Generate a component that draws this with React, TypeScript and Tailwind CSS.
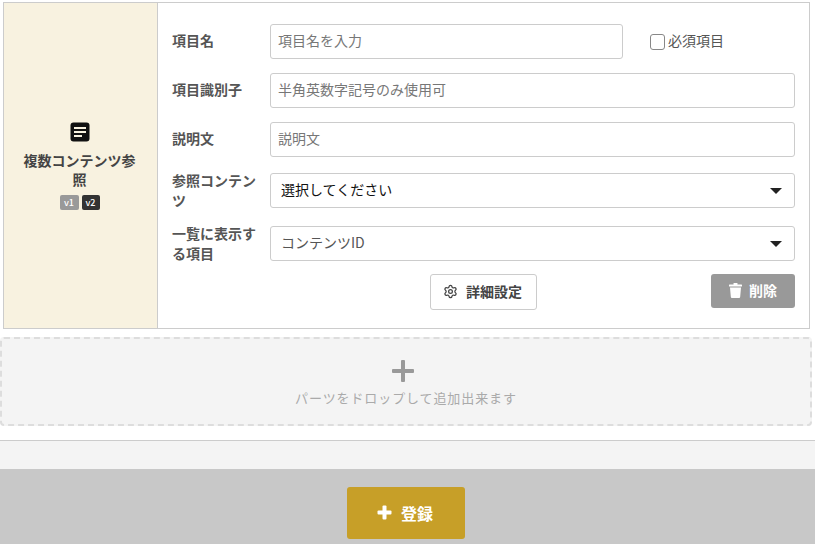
import React from 'react';
import { Settings } from 'lucide-react';

const font = "font-['Noto_Sans_CJK_JP','Noto_Sans',sans-serif]";

function Label({ children, single }: { children: React.ReactNode; single?: boolean }) {
  return (
    <div className={`w-[98px] shrink-0 pr-2 text-[14px] leading-[20px] font-bold text-[#555] ${single ? 'pb-[4px]' : 'pb-[1px]'}`}>
      {children}
    </div>
  );
}

function TextInput({ placeholder, className = '' }: { placeholder: string; className?: string }) {
  return (
    <input
      type="text"
      placeholder={placeholder}
      className={`h-[35px] rounded-[3px] border border-[#ccc] bg-white px-[7px] pb-[4px] text-[14px] outline-none placeholder:text-[#777] ${className}`}
    />
  );
}

function Select({ value, color }: { value: string; color: string }) {
  return (
    <div className={`flex h-[35px] flex-1 items-center justify-between rounded-[3px] border border-[#ccc] bg-white pl-[10px] pr-[12px] text-[14px] ${color}`}>
      <span className="pb-[2px]">{value}</span>
      <span className="h-0 w-0 border-x-[6px] border-t-[6px] border-x-transparent border-t-[#222]" />
    </div>
  );
}

export default function App() {
  return (
    <div className={`flex h-[544px] w-[815px] flex-col overflow-hidden bg-white ${font}`}>
      <div className="mx-[3px] mt-[2px] flex h-[327px] w-[807px] border border-[#ccc]">
        {/* 左のパーツ名 */}
        <div className="flex w-[154px] shrink-0 flex-col items-center justify-center border-r border-[#ccc] bg-[#f8f2e0] pl-[15px] pr-[17px] pt-[1px]">
          <svg width="20" height="20" viewBox="0 0 20 20" className="mb-[9px] ml-[1px]">
            <rect x="0.5" y="0.5" width="19" height="19" rx="3" fill="#111" />
            <rect x="4" y="5" width="12" height="2" fill="#f8f2e0" />
            <rect x="4" y="9" width="12" height="2" fill="#f8f2e0" />
            <rect x="4" y="13" width="8" height="2" fill="#f8f2e0" />
          </svg>
          <div className="text-center text-[14px] leading-[19px] font-bold text-[#444]">複数コンテンツ参照</div>
          <div className="mt-[6px] flex gap-[3px]">
            <span className="flex h-[15px] w-[19px] items-center justify-center rounded-[2px] bg-[#999] text-[9px] font-medium text-white">v1</span>
            <span className="flex h-[15px] w-[18px] items-center justify-center rounded-[2px] bg-[#333] text-[9px] font-medium text-white">v2</span>
          </div>
        </div>

        {/* フォーム */}
        <div className="flex flex-1 flex-col pl-[14px] pr-[14px] pt-[21px]">
          <div className="flex h-[35px] items-center">
            <Label single>項目名</Label>
            <TextInput placeholder="項目名を入力" className="w-[353px]" />
            <div className="ml-[27px] flex items-center pb-[3px] text-[14px] text-[#555]">
              <span className="mr-[3px] mt-[3px] h-[16px] w-[15px] rounded-[3px] border-[1.5px] border-[#888] bg-white" />
              必須項目
            </div>
          </div>
          <div className="mt-[14px] flex h-[35px] items-center">
            <Label single>項目識別子</Label>
            <TextInput placeholder="半角英数字記号のみ使用可" className="flex-1" />
          </div>
          <div className="mt-[14px] flex h-[35px] items-center">
            <Label single>説明文</Label>
            <TextInput placeholder="説明文" className="flex-1" />
          </div>
          <div className="mt-[16px] flex h-[35px] items-center">
            <Label>参照コンテンツ</Label>
            <Select value="選択してください" color="text-[#111]" />
          </div>
          <div className="mt-[18px] flex h-[35px] items-center">
            <Label>一覧に表示する項目</Label>
            <Select value="コンテンツID" color="text-[#555]" />
          </div>
          <div className="mt-[13px] flex items-start">
            <div className="ml-[258px] flex h-[36px] w-[107px] items-center justify-center gap-[8px] rounded-[3px] border border-[#ccc] bg-white pb-[1px] pr-[2px] text-[14px] font-bold text-[#444]">
              <Settings size={15} strokeWidth={2} />
              詳細設定
            </div>
            <div className="ml-auto flex h-[34px] w-[84px] items-center justify-center gap-[7px] rounded-[3px] bg-[#999] pb-[1px] text-[14px] font-bold text-white">
              <svg width="13" height="15" viewBox="0 0 13 15" fill="white">
                <rect x="0" y="1.5" width="13" height="2" rx="0.5" />
                <rect x="4.5" y="0" width="4" height="2" rx="0.5" />
                <path d="M1 4.5h11l-0.8 9.3a1.2 1.2 0 0 1-1.2 1.2H3a1.2 1.2 0 0 1-1.2-1.2z" />
              </svg>
              削除
            </div>
          </div>
        </div>
      </div>

      {/* ドロップ領域 */}
      <div className="mt-[8px] flex h-[89px] w-[812px] flex-col items-center rounded-[4px] border-2 border-dashed border-[#ddd] bg-[#f4f4f4] pt-[21px]">
        <svg width="22" height="22" viewBox="0 0 22 22" fill="#999" className="mr-[7px]">
          <rect x="9" y="0" width="4" height="22" rx="1" />
          <rect x="0" y="9" width="22" height="4" rx="1" />
        </svg>
        <div className="mt-[6px] text-[13px] leading-[20px] tracking-[0.9px] text-[#aaa]">パーツをドロップして追加出来ます</div>
      </div>

      <div className="mt-[14px] h-[29px] border-t border-[#ccc] bg-[#f4f4f4]" />

      {/* フッター */}
      <div className="flex flex-1 justify-center bg-[#c8c8c8] pr-[3px] pt-[18px]">
        <div className="flex h-[52px] w-[118px] items-center justify-center gap-[9px] rounded-[3px] bg-[#c79f28] pb-[1px] pr-[2px] text-[16px] font-bold text-white">
          <svg width="15" height="15" viewBox="0 0 15 15" fill="white">
            <rect x="5.5" y="0.5" width="4" height="14" rx="1" />
            <rect x="0.5" y="5.5" width="14" height="4" rx="1" />
          </svg>
          登録
        </div>
      </div>
    </div>
  );
}
